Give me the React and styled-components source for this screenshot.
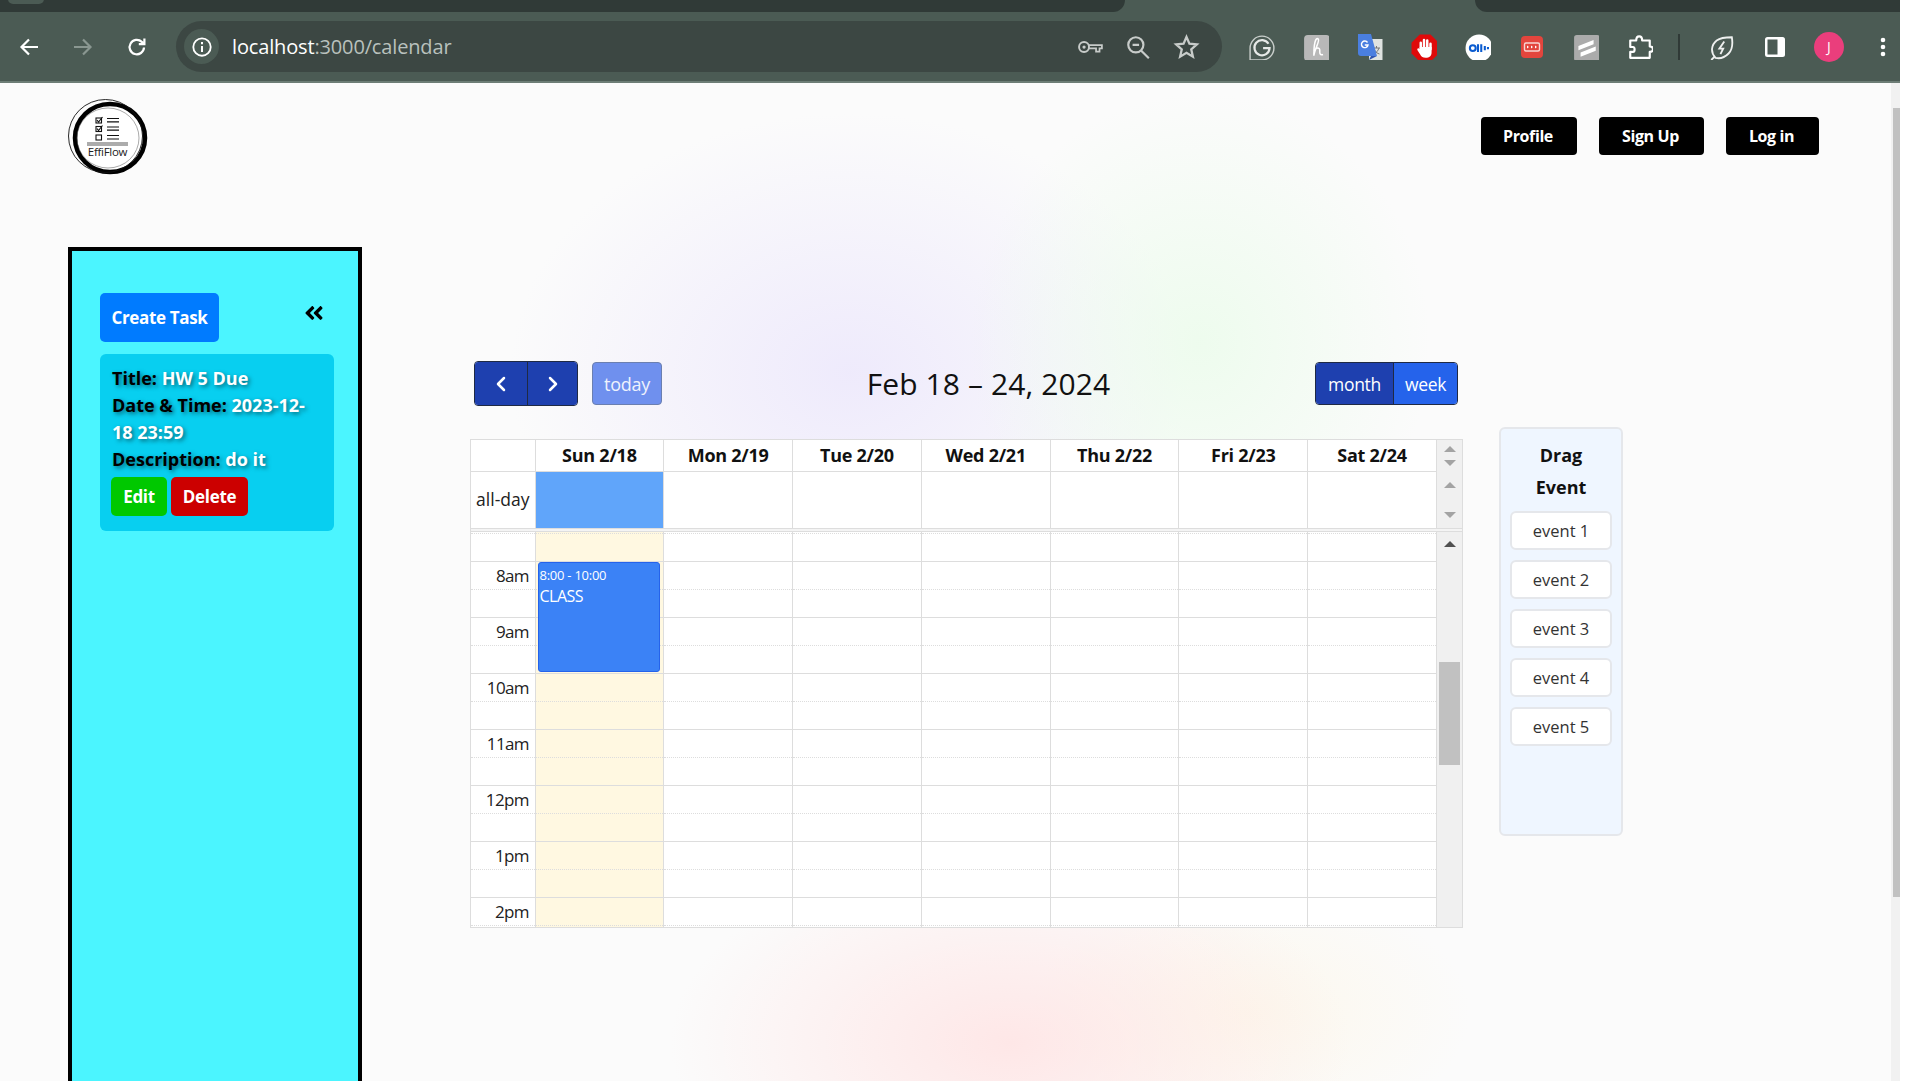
import React from 'react';
import styled, { createGlobalStyle } from 'styled-components';
import { FaAngleDoubleLeft } from 'react-icons/fa';
import { ChevronLeft, ChevronRight } from 'lucide-react';

const Global = createGlobalStyle`
  html, body { margin: 0; padding: 0; background: #fff; overflow: hidden; }
  body { font-family: "Open Sans", "Noto Sans", "Liberation Sans", sans-serif; }
  * { box-sizing: border-box; }
`;

const Frame = styled.div`
  width: 1900px; height: 1081px; display: flex; flex-direction: column; overflow: hidden;
`;

/* ---------- browser chrome ---------- */
const TabStrip = styled.div`
  height: 12px; background: #4b5b54; display: flex; flex: none;
`;
const InactiveTabs = styled.div`
  position: relative; overflow: hidden; background: #303a37; height: 12px; flex: ${p => (p.$left ? '0 0 1125px' : '1')};
  margin-left: ${p => (p.$left ? 0 : '350px')};
  border-radius: ${p => (p.$left ? '0 0 14px 0' : '0 0 0 14px')};
`;
const TabLeftCorner = styled.div`
  position: absolute; left: 8px; top: -6px; width: 36px; height: 10px; border-radius: 5px; background: #4b5b54;
`;
const Toolbar = styled.div`
  height: 71px; flex: none; background: #4b5b54; border-bottom: 2px solid #6d7d76;
  display: flex; align-items: center;
`;
const NavBtn = styled.div`
  width: 54px; height: 40px; display: flex; align-items: center; justify-content: center;
  color: ${p => (p.$dim ? '#8a9791' : '#fff')};
`;
const NavBtns = styled.div`
  display: flex; padding-left: 2px; width: 176px; flex: none;
`;
const Omnibox = styled.div`
  width: 1046px; height: 51px; flex: none; background: #3c4743; border-radius: 26px;
  display: flex; align-items: center; padding: 0 22px 0 8px;
`;
const InfoChip = styled.div`
  width: 35px; height: 35px; border-radius: 50%; background: #4b5b54; flex: none;
  display: flex; align-items: center; justify-content: center;
`;
const UrlText = styled.div`
  margin-left: 13px; font-size: 20px; flex: 1; color: #fff; letter-spacing: -0.15px;
  span { color: #b9c1bd; }
`;
const OmniIcons = styled.div`
  display: flex; gap: 22px; align-items: center; color: #c8ccca;
`;
const ExtIcons = styled.div`
  display: flex; align-items: center; margin-left: 13px;
`;
const Ext = styled.div`
  width: 54px; height: 40px; display: flex; align-items: center; justify-content: center; flex: none;
`;
const Sep = styled.div`
  width: 2px; height: 26px; background: #303a37; margin: 0 14px 0 11px; flex: none;
`;
const Avatar = styled.div`
  width: 30px; height: 30px; border-radius: 50%; background: #ea3e7c; color: #fff; font-size: 14px;
  display: flex; align-items: center; justify-content: center;
`;

/* ---------- page ---------- */
const Viewport = styled.div`
  flex: 1; display: flex; min-height: 0;
`;
const Page = styled.div`
  flex: 1; min-width: 0; display: flex; flex-direction: column; overflow: hidden;
  background:
    radial-gradient(ellipse 230px 250px at 1200px 260px, rgba(232,252,232,.7), rgba(232,252,232,0)),
    radial-gradient(ellipse 340px 260px at 850px 290px, rgba(235,230,252,.8), rgba(235,230,252,0)),
    radial-gradient(ellipse 340px 190px at 1010px 960px, rgba(255,226,226,.8), rgba(255,226,226,0)),
    radial-gradient(ellipse 220px 130px at 1250px 930px, rgba(253,246,230,.7), rgba(253,246,230,0)),
    #fbfbfb;
`;
const PageScroll = styled.div`
  width: 9px; flex: none; background: #f1f1f1; display: flex; justify-content: flex-end; padding-top: 25px;
`;
const PageThumb = styled.div`
  width: 7px; height: 789px; background: #c1c1c1;
`;
const Nav = styled.header`
  height: 164px; flex: none; display: flex; justify-content: space-between; align-items: flex-start;
  padding: 16px 72px 0 68px;
`;
const NavActions = styled.div`
  display: flex; margin-top: 18px; gap: 22px;
`;
const NavButton = styled.button`
  height: 38px; width: ${p => p.$w}px; border: 0; border-radius: 4px; background: #000; color: #fff;
  font: 700 16px "Open Sans", sans-serif; letter-spacing: -0.4px; padding: 0 2px 0 0;
`;
const Body = styled.main`
  flex: 1; min-height: 0; display: flex; align-items: stretch; padding-left: 68px;
`;

/* ---------- sidebar ---------- */
const Sidebar = styled.aside`
  width: 294px; flex: none; background: #4bf5ff; border: 4px solid #000; border-bottom: 0;
  padding: 42px 24px 0 28px; margin-bottom: -4px;
`;
const SideHead = styled.div`
  display: flex; justify-content: space-between; align-items: flex-start; margin-bottom: 12px;
`;
const CreateBtn = styled.button`
  width: 119px; height: 49px; background: #007bff; color: #fff; border: 0; border-radius: 5px; padding: 0;
  font: 700 17px "Open Sans", sans-serif; letter-spacing: -0.35px;
`;
const Collapse = styled.div`
  color: #000; margin: 9px 9px 0 0; height: 22px; font-size: 22px; line-height: 1; display: flex;
`;
const TaskCard = styled.section`
  width: 234px; height: 177px; background: #08cff0; border-radius: 6px; padding: 11px 11px 0 12px;
  color: #fff; font-size: 18px; font-weight: 700; line-height: 27px;
  text-shadow: 2px 2px 4px rgba(0,0,0,.5);
`;
const TaskLine = styled.div``;
const Key = styled.span`
  color: #000;
`;
const TaskActions = styled.div`
  display: flex; gap: 4px; margin-top: 4px; margin-left: -1px; text-shadow: none;
`;
const TaskBtn = styled.button`
  height: 39px; width: ${p => p.$w}px; border: 0; border-radius: 5px; padding: 0; color: #fff;
  background: ${p => p.$bg}; font: 700 17px "Open Sans", sans-serif; letter-spacing: -0.3px;
`;

/* ---------- calendar ---------- */
const CalendarArea = styled.section`
  width: 993px; margin-left: 108px; padding-top: 114px; flex: none;
`;
const CalToolbar = styled.div`
  display: flex; justify-content: space-between; align-items: center; height: 45px;
  padding: 0 5px 0 4px; margin-bottom: 33px;
`;
const LeftTools = styled.div`
  display: flex; gap: 14px; align-items: center;
`;
const BtnGroup = styled.div`
  display: flex; height: ${p => p.$h || 43}px; border-radius: 4px; overflow: hidden; border: 1px solid #1f2a44;
`;
const GroupBtn = styled.button`
  width: ${p => p.$w}px; height: 100%; border: 0; padding: 0; color: #fff;
  background: ${p => p.$bg || '#1e40af'}; display: flex; align-items: center; justify-content: center;
  font: 400 17.5px "Open Sans", sans-serif; letter-spacing: -0.3px;
  & + & { border-left: 1px solid #1f2a44; }
`;
const TodayBtn = styled.button`
  width: 70px; height: 43px; border: 1px solid #6b7fb0; border-radius: 4px; padding: 0;
  background: #6f90ee; color: #eef2fd; font: 400 18px "Open Sans", sans-serif; letter-spacing: -0.3px;
`;
const CalTitle = styled.h2`
  margin: 0; font: 400 30px "Open Sans", sans-serif; color: #111; letter-spacing: 0.1px; white-space: nowrap;
`;
const Grid = styled.div`
  height: 489px; background: #fff; border: 1px solid #ddd; display: flex; flex-direction: column;
`;
const Columns = 'grid-template-columns: 64.5px repeat(7, 1fr) 25px;';
const HeadRow = styled.div`
  ${Columns} display: grid; height: 32px; flex: none;
`;
const HeadCell = styled.div`
  border-right: 1px solid #ddd; border-bottom: 1px solid #ddd; display: flex; align-items: center; justify-content: center;
  font-weight: 700; font-size: 18px; letter-spacing: -0.25px; color: #111; padding-bottom: 1px;
`;
const AllDayRow = styled.div`
  ${Columns} display: grid; height: 56px; flex: none;
`;
const AllDayLabel = styled.div`
  border-right: 1px solid #ddd; display: flex; align-items: center; justify-content: flex-end; padding: 0 5px 2px 0;
  font-size: 17.5px; color: #222;
`;
const AllDayCell = styled.div`
  border-right: 1px solid #ddd; background: ${p => (p.$selected ? '#60a5fa' : '#fff')};
`;
const Gutter = styled.div`
  background: #f0f0f0; display: flex; flex-direction: column; align-items: center; position: relative;
`;
const HeadGutter = styled(Gutter)`
  justify-content: flex-start; padding-top: 6px; gap: 8px;
`;
const AllDayGutter = styled(Gutter)`
  justify-content: space-between; padding: 10px 0 10px;
`;
const Arrow = styled.span`
  width: 0; height: 0; border-left: 6px solid transparent; border-right: 6px solid transparent;
  ${p => (p.$down ? 'border-top' : 'border-bottom')}: 6px solid ${p => (p.$dark ? '#505050' : '#a3a3a3')};
`;
const Divider = styled.div`
  height: 4px; flex: none; background: #f4f4f4; border-top: 1px solid #ddd; border-bottom: 1px solid #ddd;
`;
const TimeBody = styled.div`
  ${Columns} display: grid; flex: 1; min-height: 0; overflow: hidden;
`;
const DayCol = styled.div`
  position: relative; border-right: 1px solid #ddd; background: ${p => (p.$today ? '#fff8e1' : '#fff')};
`;
const AxisCol = styled(DayCol)``;
const Slot = styled.div`
  height: ${p => p.$h || 28}px; border-bottom: 1px ${p => (p.$dot ? 'dotted' : 'solid')} #ddd;
  display: flex; align-items: center; justify-content: flex-end; padding-right: 5.5px;
  font-size: 17px; letter-spacing: -0.6px; color: #222;
`;
const BodyGutter = styled(Gutter)`
  padding: 9px 0 10px; height: 100%;
`;
const GutterThumb = styled.div`
  width: 21px; height: 103px; background: #c1c1c1; margin-top: 115px; margin-bottom: auto;
`;
const EventBox = styled.div`
  position: absolute; left: 2px; right: 3px; top: 30px; height: 110px; background: #3b82f6; border: 1px solid #2563eb;
  border-radius: 3px; color: #fff; padding: 1.5px 1px;
`;
const EventTime = styled.div`
  font-size: 13px; line-height: 20px; letter-spacing: -0.25px;
`;
const EventTitle = styled.div`
  font-size: 16px; line-height: 24px; margin-top: -0.5px; letter-spacing: -0.5px;
`;

/* ---------- drag panel ---------- */
const DragPanel = styled.aside`
  width: 124px; height: 409px; flex: none; margin: 180px 0 0 36px; background: #eff6ff;
  border: 2px solid #e5e7eb; border-radius: 6px; padding: 10px 9px 0;
`;
const DragTitle = styled.h3`
  margin: 0 auto 8px; max-width: 70px; text-align: center; font-size: 18px; font-weight: 700; line-height: 32px; color: #111;
`;
const DragItem = styled.div`
  height: 39px; margin-bottom: 10px; background: #fff; border: 2px solid #e5e7eb; border-radius: 6px;
  display: flex; align-items: center; justify-content: center; font-size: 16.5px; color: #333;
  width: 102px;
`;

const days = ['Sun 2/18', 'Mon 2/19', 'Tue 2/20', 'Wed 2/21', 'Thu 2/22', 'Fri 2/23', 'Sat 2/24'];
const hours = ['8am', '9am', '10am', '11am', '12pm', '1pm', '2pm'];

const Slots = ({ labels }) => (
  <>
    <Slot $h={2} $dot />
    <Slot />
    {hours.map(h => (
      <React.Fragment key={h}>
        <Slot $dot>{labels ? h : ''}</Slot>
        <Slot />
      </React.Fragment>
    ))}
  </>
);

const Logo = () => (
  <svg width="80" height="78" viewBox="18 14 80 78" aria-label="EffiFlow logo">
    <ellipse cx="60" cy="53" rx="35" ry="34" fill="#fff" stroke="#000" strokeWidth="4.5" />
    <ellipse cx="55.5" cy="51" rx="37" ry="36.5" fill="none" stroke="#111" strokeWidth="0.9" />
    <ellipse cx="58" cy="53" rx="31" ry="30" fill="none" stroke="#555" strokeWidth="0.5" />
    <g fill="none" stroke="#111" strokeWidth="1.1">
      <rect x="46" y="33" width="5.5" height="5" />
      <rect x="46" y="41.5" width="5.5" height="5" />
      <rect x="46" y="50" width="5.5" height="5" />
      <path d="M47 35l1.5 2 4-5M47 43.5l1.5 2 4-5" />
      <path d="M57 33.5h12M57 36.8h12M57 42h12M57 45.2h12M57 50.5h12M57 54h12" strokeWidth="1.2" />
      <path d="M37 58h41M37 60h41" strokeWidth="0.7" />
    </g>
    <text x="57.5" y="70.5" textAnchor="middle" fontFamily="Open Sans, sans-serif" fontSize="11.5" letterSpacing="-0.3" fill="#222">EffiFlow</text>
  </svg>
);

const S = ({ children, size = 24, vb = '0 0 24 24' }) => (
  <svg width={size} height={size} viewBox={vb}>{children}</svg>
);

export default function App() {
  return (
    <>
      <Global />
      <Frame>
        <TabStrip>
          <InactiveTabs $left><TabLeftCorner /></InactiveTabs>
          <InactiveTabs />
        </TabStrip>
        <Toolbar>
          <NavBtns>
            <NavBtn>
              <S><path d="M21 12H5M12 4.500 4.500 12l7.500 7.500" fill="none" stroke="currentColor" strokeWidth="2.200" /></S>
            </NavBtn>
            <NavBtn $dim>
              <S><path d="M3 12h16M12 4.500l7.500 7.500-7.500 7.500" fill="none" stroke="currentColor" strokeWidth="2.200" /></S>
            </NavBtn>
            <NavBtn>
              <S><path d="M19 12.500a7.200 7.200 0 1 1-2.200-5.600L19 9M19.400 3.600V9.200h-5.600" fill="none" stroke="currentColor" strokeWidth="2.200" /></S>
            </NavBtn>
          </NavBtns>
          <Omnibox>
            <InfoChip>
              <S size={22}>
                <circle cx="12" cy="12" r="9.500" fill="none" stroke="#fff" strokeWidth="2" />
                <path d="M12 11v6.500M12 6.500v2.400" stroke="#fff" strokeWidth="2.200" />
              </S>
            </InfoChip>
            <UrlText>localhost<span>:3000/calendar</span></UrlText>
            <OmniIcons>
              <S size={26}>
                <circle cx="6.500" cy="12" r="4.600" fill="none" stroke="currentColor" strokeWidth="1.800" />
                <circle cx="6.500" cy="12" r="1.500" fill="currentColor" />
                <path d="M11 10.200h12v3h-2.200v3h-3.200v-3H11" fill="none" stroke="currentColor" strokeWidth="1.600" />
              </S>
              <S size={26}>
                <circle cx="10" cy="10" r="7" fill="none" stroke="currentColor" strokeWidth="2" />
                <path d="M15 15.400 22 22.400M7 10h6" stroke="currentColor" strokeWidth="2" />
              </S>
              <S size={27}>
                <path d="m12 3.500 2.600 6 6.600.6-5 4.400 1.500 6.500-5.700-3.400-5.700 3.400 1.500-6.500-5-4.400 6.600-.6z" fill="none" stroke="currentColor" strokeWidth="2" />
              </S>
            </OmniIcons>
          </Omnibox>
          <ExtIcons>
            <Ext>
              <S size={26}>
                <path d="M1 24V13A11 11 0 1 1 12 24z" fill="none" stroke="#c9cfcc" strokeWidth="1.300" />
                <path d="M18 9a7 7 0 1 0 1 4h-6" fill="none" stroke="#e6e9e7" strokeWidth="2" />
              </S>
            </Ext>
            <Ext>
              <S size={26}>
                <rect x="1" y="1" width="24" height="24" rx="3.500" fill="#b8b8b8" />
                <path d="M10 20C11 13 16 6 14 4.500 11.500 3 10 9 10 20M10 16c2-4 5.500-4 5.500-1 0 2-.5 5 3 4" fill="none" stroke="#fff" strokeWidth="1.400" />
              </S>
            </Ext>
            <Ext>
              <S size={28} vb="0 0 28 28">
                <path d="M13 6h13.500v21H13z" fill="#dfe3e1" />
                <path d="M17 15h7M20.500 13v2M23 15c-1 3-3 5-5 6M18.500 17c1 2 3 3.500 5 4" fill="none" stroke="#777" strokeWidth="1" />
                <path d="M2 1h13l6 22H5a3 3 0 0 1-3-3z" fill="#4a7fe0" />
                <path d="M15 23l-2 4 8-4z" fill="#2f55b0" />
                <path d="M11.500 9.500A3.300 3.300 0 1 0 12 12H8.800" fill="none" stroke="#fff" strokeWidth="1.400" />
              </S>
            </Ext>
            <Ext>
              <S size={26}>
                <path d="M8 .5h10L25.500 8v10L18 25.500H8L.500 18V8z" fill="#df0a0a" />
                <path d="M9 13.500V8M12 13V5.500M15 13V6M18 14V9" stroke="#fff" strokeWidth="2.300" strokeLinecap="round" />
                <path d="M8 12h11v5c0 3-2 5-5.500 5C11 22 9.500 21 8.500 19L6 15c-.8-1.500 1-2.500 2-1z" fill="#fff" />
              </S>
            </Ext>
            <Ext>
              <S size={26}>
                <circle cx="13" cy="13" r="12.500" fill="#fff" />
                <circle cx="7.200" cy="13" r="2.700" fill="none" stroke="#0b5cd0" strokeWidth="1.900" />
                <path d="M12 9.500v7M15 9.500v7M18.300 11v4M21.200 12v2" stroke="#0b5cd0" strokeWidth="1.900" />
              </S>
            </Ext>
            <Ext>
              <S size={24}>
                <rect x="1" y="1" width="22" height="22" rx="4" fill="#e3453d" />
                <rect x="4.500" y="8" width="15" height="8" rx="1.500" fill="none" stroke="#f7d5d2" strokeWidth="1.400" />
                <path d="M7 10.500l2 1.500-2 1.500zM11 10.500l2 1.500-2 1.500zM15 10.500l2 1.500-2 1.500z" fill="#fff" />
              </S>
            </Ext>
            <Ext>
              <S size={26}>
                <rect x="1" y="1" width="24" height="24" rx="2.500" fill="#ababab" />
                <path d="M5 11 19 5.500v4L5 15zM7 17 21 11.500v4L7 21z" fill="#fff" />
              </S>
            </Ext>
            <Ext>
              <S size={26}>
                <path d="M3 6h5.500c0-5 5.500-5 5.500 0H21v5.500c4 0 4 5 0 5V22H3v-5.500h2.500c2 0 2-4.500 0-4.500H3z" fill="none" stroke="#fff" strokeWidth="2" strokeLinejoin="round" />
              </S>
            </Ext>
            <Sep />
            <Ext>
              <S size={26}>
                <path d="M3 24l3-3M7 22C2 17 3 10 8 6c4-3 9-3 14-3 1 6 0 12-3 15-4 4-8 5-12 4z" fill="none" stroke="#eef0ef" strokeWidth="1.700" />
                <path d="M15 7l-4.500 6.500H14L11.500 18.500" fill="none" stroke="#eef0ef" strokeWidth="1.700" />
              </S>
            </Ext>
            <Ext>
              <S size={24}>
                <rect x="2" y="2" width="20" height="20" rx="2.500" fill="#fff" />
                <rect x="4.500" y="4.500" width="10" height="15" fill="#4b5b54" />
              </S>
            </Ext>
            <Ext><Avatar>J</Avatar></Ext>
            <Ext>
              <S size={24}>
                <circle cx="12" cy="5" r="2.300" fill="#fff" />
                <circle cx="12" cy="12" r="2.300" fill="#fff" />
                <circle cx="12" cy="19" r="2.300" fill="#fff" />
              </S>
            </Ext>
          </ExtIcons>
        </Toolbar>
        <Viewport>
          <Page>
            <Nav>
              <Logo />
              <NavActions>
                <NavButton $w={96}>Profile</NavButton>
                <NavButton $w={105}>Sign Up</NavButton>
                <NavButton $w={93}>Log in</NavButton>
              </NavActions>
            </Nav>
            <Body>
              <Sidebar>
                <SideHead>
                  <CreateBtn>Create Task</CreateBtn>
                  <Collapse><FaAngleDoubleLeft /></Collapse>
                </SideHead>
                <TaskCard>
                  <TaskLine><Key>Title:</Key> HW 5 Due</TaskLine>
                  <TaskLine><Key>Date &amp; Time:</Key> 2023-12-18 23:59</TaskLine>
                  <TaskLine><Key>Description:</Key> do it</TaskLine>
                  <TaskActions>
                    <TaskBtn $w={56} $bg="#00c800">Edit</TaskBtn>
                    <TaskBtn $w={77} $bg="#cc0000">Delete</TaskBtn>
                  </TaskActions>
                </TaskCard>
              </Sidebar>
              <CalendarArea>
                <CalToolbar>
                  <LeftTools>
                    <BtnGroup $h={45}>
                      <GroupBtn $w={52}><ChevronLeft size={24} strokeWidth={2.500} /></GroupBtn>
                      <GroupBtn $w={50}><ChevronRight size={24} strokeWidth={2.500} /></GroupBtn>
                    </BtnGroup>
                    <TodayBtn>today</TodayBtn>
                  </LeftTools>
                  <CalTitle>Feb 18 – 24, 2024</CalTitle>
                  <BtnGroup>
                    <GroupBtn $w={77}>month</GroupBtn>
                    <GroupBtn $w={64} $bg="#2563eb">week</GroupBtn>
                  </BtnGroup>
                </CalToolbar>
                <Grid>
                  <HeadRow>
                    <HeadCell />
                    {days.map(d => <HeadCell key={d}>{d}</HeadCell>)}
                    <HeadGutter><Arrow /><Arrow $down /></HeadGutter>
                  </HeadRow>
                  <AllDayRow>
                    <AllDayLabel>all-day</AllDayLabel>
                    {days.map((d, i) => <AllDayCell key={d} $selected={i === 0} />)}
                    <AllDayGutter><Arrow /><Arrow $down /></AllDayGutter>
                  </AllDayRow>
                  <Divider />
                  <TimeBody>
                    <AxisCol><Slots labels /></AxisCol>
                    {days.map((d, i) => (
                      <DayCol key={d} $today={i === 0}>
                        <Slots />
                        {i === 0 && (
                          <EventBox>
                            <EventTime>8:00 - 10:00</EventTime>
                            <EventTitle>CLASS</EventTitle>
                          </EventBox>
                        )}
                      </DayCol>
                    ))}
                    <BodyGutter>
                      <Arrow $dark />
                      <GutterThumb />
                      <Arrow $down $dark />
                    </BodyGutter>
                  </TimeBody>
                </Grid>
              </CalendarArea>
              <DragPanel>
                <DragTitle>Drag Event</DragTitle>
                {[1, 2, 3, 4, 5].map(n => <DragItem key={n}>event {n}</DragItem>)}
              </DragPanel>
            </Body>
          </Page>
          <PageScroll><PageThumb /></PageScroll>
        </Viewport>
      </Frame>
    </>
  );
}
